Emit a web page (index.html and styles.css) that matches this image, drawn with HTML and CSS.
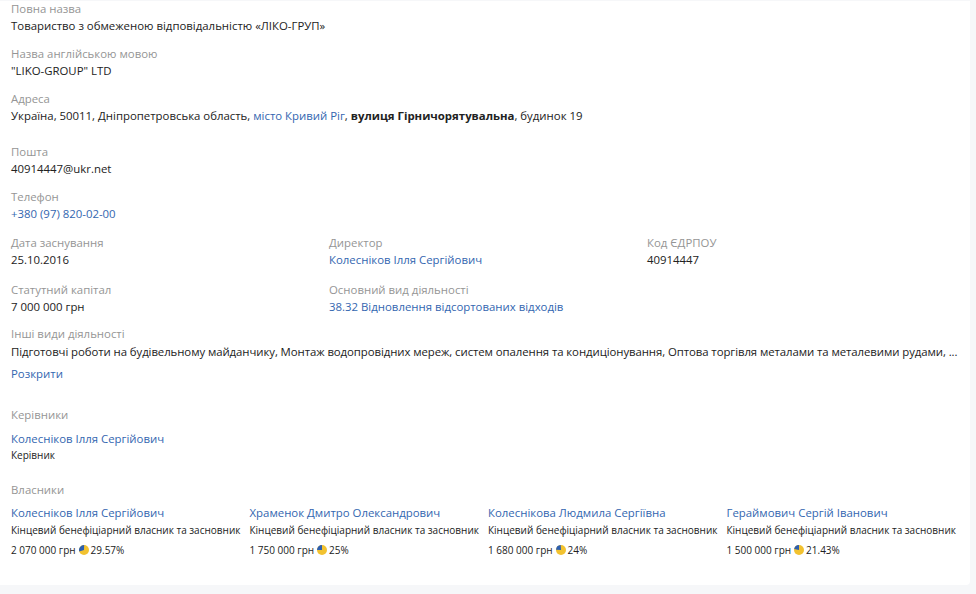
FILE: index.html
```html
<!DOCTYPE html>
<html lang="uk">
<head>
    <meta charset="UTF-8">
    <meta name="viewport" content="width=device-width, initial-scale=1.0">
    <title>ЛІКО-ГРУП</title>
    <link rel="stylesheet" href="styles.css">
</head>
<body>
    <main class="company">
        <div class="field">
            <div class="label">Повна назва</div>
            <div class="value">Товариство з обмеженою відповідальністю «ЛІКО-ГРУП»</div>
        </div>
        <div class="field">
            <div class="label">Назва англійською мовою</div>
            <div class="value">"LIKO-GROUP" LTD</div>
        </div>
        <div class="field address">
            <div class="label">Адреса</div>
            <div class="value">Україна, 50011, Дніпропетровська область, <a href="#">місто Кривий Ріг</a>, <b>вулиця Гірничорятувальна</b>, будинок 19</div>
        </div>
        <div class="field">
            <div class="label">Пошта</div>
            <div class="value">40914447@ukr.net</div>
        </div>
        <div class="field">
            <div class="label">Телефон</div>
            <div class="value"><a href="#">+380 (97) 820-02-00</a></div>
        </div>

        <div class="grid">
            <div class="field">
                <div class="label">Дата заснування</div>
                <div class="value">25.10.2016</div>
            </div>
            <div class="field">
                <div class="label">Директор</div>
                <div class="value"><a href="#">Колесніков Ілля Сергійович</a></div>
            </div>
            <div class="field">
                <div class="label">Код ЄДРПОУ</div>
                <div class="value">40914447</div>
            </div>
            <div class="field">
                <div class="label">Статутний капітал</div>
                <div class="value">7 000 000 грн</div>
            </div>
            <div class="field">
                <div class="label">Основний вид діяльності</div>
                <div class="value"><a href="#">38.32 Відновлення відсортованих відходів</a></div>
            </div>
        </div>

        <div class="field activities">
            <div class="label">Інші види діяльності</div>
            <div class="value ellipsis">Підготовчі роботи на будівельному майданчику, Монтаж водопровідних мереж, систем опалення та кондиціонування, Оптова торгівля металами та металевими рудами, ...</div>
            <div class="value more"><a href="#">Розкрити</a></div>
        </div>

        <section class="block">
            <div class="label">Керівники</div>
            <div class="person">
                <a href="#">Колесніков Ілля Сергійович</a>
                <div class="role">Керівник</div>
            </div>
        </section>

        <section class="block owners-block">
            <div class="label">Власники</div>
            <div class="owners">
                <div class="person">
                    <a href="#">Колесніков Ілля Сергійович</a>
                    <div class="role">Кінцевий бенефіціарний власник та засновник</div>
                    <div class="share">2 070 000 грн
                        <svg class="pie" viewBox="0 0 12 12"><circle cx="6" cy="6" r="6" fill="#f2c230"/><path d="M6 6 L6 0 A6 6 0 0 1 11.7 7.8 Z" fill="#2d5fb0" transform="rotate(-106 6 6)"/></svg>29.57%</div>
                </div>
                <div class="person">
                    <a href="#">Храменок Дмитро Олександрович</a>
                    <div class="role">Кінцевий бенефіціарний власник та засновник</div>
                    <div class="share">1 750 000 грн
                        <svg class="pie" viewBox="0 0 12 12"><circle cx="6" cy="6" r="6" fill="#f2c230"/><path d="M6 6 L6 0 A6 6 0 0 0 0 6 Z" fill="#2d5fb0"/></svg>25%</div>
                </div>
                <div class="person">
                    <a href="#">Колеснікова Людмила Сергіївна</a>
                    <div class="role">Кінцевий бенефіціарний власник та засновник</div>
                    <div class="share">1 680 000 грн
                        <svg class="pie" viewBox="0 0 12 12"><circle cx="6" cy="6" r="6" fill="#f2c230"/><path d="M6 6 L6 0 A6 6 0 0 1 11.95 5.25 Z" fill="#2d5fb0" transform="rotate(-86 6 6)"/></svg>24%</div>
                </div>
                <div class="person">
                    <a href="#">Гераймович Сергій Іванович</a>
                    <div class="role">Кінцевий бенефіціарний власник та засновник</div>
                    <div class="share">1 500 000 грн
                        <svg class="pie" viewBox="0 0 12 12"><circle cx="6" cy="6" r="6" fill="#f2c230"/><path d="M6 6 L6 0 A6 6 0 0 1 11.85 4.66 Z" fill="#2d5fb0" transform="rotate(-77 6 6)"/></svg>21.43%</div>
                </div>
            </div>
        </section>
    </main>
</body>
</html>
```

FILE: styles.css
```css
/* Page */
body {
    margin: 0;
    background-color: #f6f7f9;
    font-family: "Open Sans", "Noto Sans", sans-serif;
    font-size: 11.4px;
    color: #222;
}

a {
    color: #3366b0;
    text-decoration: none;
}

/* White card holding all company info */
.company {
    width: 970px;
    box-sizing: border-box;
    background-color: #fff;
    padding: 0 5px 26px 11px;
    border-radius: 0 0 4px 0;
}

.field {
    margin-bottom: 11px;
}

.field.address {
    margin-bottom: 19px;
}

.label {
    color: #959595;
    line-height: 16px;
}

.value {
    line-height: 18px;
}

.field > .label {
    margin-top: 1px;
}

.ellipsis {
    white-space: nowrap;
    overflow: hidden;
    text-overflow: ellipsis;
    letter-spacing: -0.08px;
    line-height: 20px;
}

.more {
    margin-top: 3px;
}

/* Three-column facts */
.grid {
    display: grid;
    grid-template-columns: repeat(3, 318px);
    row-gap: 12px;
    margin-bottom: 10px;
}

.grid .field {
    margin-bottom: 0;
}

.activities {
    margin-bottom: 24px;
}

/* Managers and owners */
.block {
    margin-bottom: 20px;
}

.owners-block {
    margin-bottom: 0;
}

.block .label {
    margin-bottom: 7px;
}

.owners-block .label {
    margin-bottom: 6px;
}

.person a {
    display: block;
    line-height: 18px;
}

.role {
    font-size: 10px;
    line-height: 14px;
    white-space: nowrap;
}

.owners .role {
    line-height: 17px;
}

.owners {
    display: grid;
    grid-template-columns: repeat(4, 238.5px);
}

.share {
    margin-top: 2px;
    font-size: 10px;
    line-height: 18px;
    display: flex;
    align-items: center;
}

.pie {
    width: 10px;
    height: 10px;
    margin: 0 2px 0 3px;
}
```
